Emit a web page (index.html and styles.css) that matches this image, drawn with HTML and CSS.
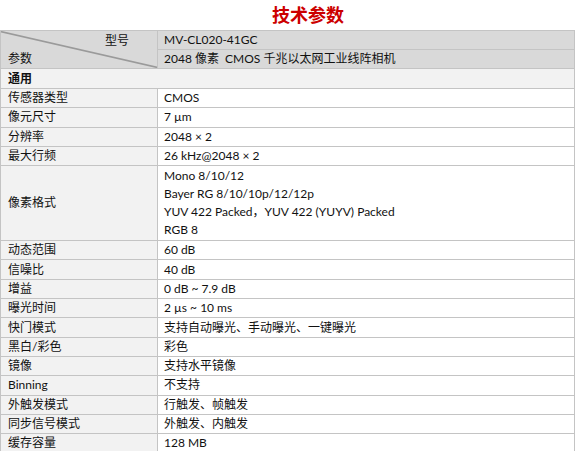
FILE: index.html
```html
<!DOCTYPE html>
<html lang="zh">
<head>
<meta charset="utf-8">
<title>技术参数</title>
<link rel="stylesheet" href="styles.css">
</head>
<body>
<h1 class="title">技术参数</h1>
<table class="spec">
  <colgroup>
    <col class="col-key">
    <col class="col-val">
  </colgroup>
  <tbody>
    <tr class="head">
      <td class="corner" rowspan="2">
        <div class="corner-box">
          <svg class="diag" width="157" height="37" viewBox="0 0 157 37" aria-hidden="true">
            <line x1="0" y1="0.5" x2="157" y2="36.5" stroke="#9a9a9a" stroke-width="1.6"></line>
          </svg>
          <span class="corner-top">型号</span>
          <span class="corner-bottom">参数</span>
        </div>
      </td>
      <td>MV-CL020-41GC</td>
    </tr>
    <tr class="head">
      <td>2048 像素&nbsp; CMOS 千兆以太网工业线阵相机</td>
    </tr>
    <tr class="section">
      <td colspan="2">通用</td>
    </tr>
    <tr><td class="k">传感器类型</td><td>CMOS</td></tr>
    <tr><td class="k">像元尺寸</td><td>7 µm</td></tr>
    <tr><td class="k">分辨率</td><td>2048 × 2</td></tr>
    <tr><td class="k">最大行频</td><td>26 kHz@2048 × 2</td></tr>
    <tr class="multi">
      <td class="k">像素格式</td>
      <td>
        <div class="line">Mono 8/10/12</div>
        <div class="line">Bayer RG 8/10/10p/12/12p</div>
        <div class="line">YUV 422 Packed，YUV 422 (YUYV) Packed</div>
        <div class="line">RGB 8</div>
      </td>
    </tr>
    <tr><td class="k">动态范围</td><td>60 dB</td></tr>
    <tr><td class="k">信噪比</td><td>40 dB</td></tr>
    <tr><td class="k">增益</td><td>0 dB ~ 7.9 dB</td></tr>
    <tr><td class="k">曝光时间</td><td>2 µs ~ 10 ms</td></tr>
    <tr><td class="k">快门模式</td><td>支持自动曝光、手动曝光、一键曝光</td></tr>
    <tr><td class="k">黑白/彩色</td><td>彩色</td></tr>
    <tr><td class="k">镜像</td><td>支持水平镜像</td></tr>
    <tr><td class="k">Binning</td><td>不支持</td></tr>
    <tr><td class="k">外触发模式</td><td>行触发、帧触发</td></tr>
    <tr><td class="k">同步信号模式</td><td>外触发、内触发</td></tr>
    <tr><td class="k">缓存容量</td><td>128 MB</td></tr>
  </tbody>
</table>
</body>
</html>
```

FILE: styles.css
```css
html, body {
  margin: 0;
  padding: 0;
  background: #ffffff;
}

body {
  font-family: "Lato", "Noto Sans CJK SC", sans-serif;
  font-size: 12px;
  color: #111111;
  width: 576px;
  overflow: hidden;
}

.title {
  margin: 0;
  height: 30px;
  box-sizing: border-box;
  padding: 3px 0 0 40px;
  text-align: center;
  font-family: "Noto Sans CJK SC", sans-serif;
  font-size: 18px;
  line-height: 22px;
  font-weight: 700;
  color: #cc0000;
}

.spec {
  width: 575px;
  border-collapse: collapse;
  table-layout: fixed;
  border: 1px solid #c4c4c4;
}

.col-key {
  width: 157px;
}

.spec td {
  border: 1px solid #c4c4c4;
  padding: 0 0 0 6px;
  height: 18.3px;
  line-height: 16px;
  white-space: nowrap;
  vertical-align: middle;
  background: #ffffff;
}

.spec td.k {
  padding-left: 7px;
  background: #f2f2f2;
}

.spec tr.head td {
  background: #d9d9d9;
  height: 18px;
}

.spec tr.head td.corner {
  padding: 0;
  vertical-align: top;
  overflow: hidden;
}

.corner-box {
  display: grid;
  grid-template-rows: 19px 18px;
  grid-template-columns: 1fr;
  height: 37px;
}

.diag {
  grid-row: 1 / 3;
  grid-column: 1;
  display: block;
  width: 100%;
  height: 37px;
}

.corner-top {
  grid-row: 1;
  grid-column: 1;
  justify-self: end;
  align-self: center;
  margin-right: 28px;
}

.corner-bottom {
  grid-row: 2;
  grid-column: 1;
  justify-self: start;
  align-self: center;
  margin-left: 7px;
}

.spec tr.section td {
  background: #f2f2f2;
  font-weight: 700;
  height: 19px;
  padding-left: 7px;
}

.spec tr.multi td {
  height: 74px;
}

.spec tr.multi td .line {
  line-height: 18px;
}
```
